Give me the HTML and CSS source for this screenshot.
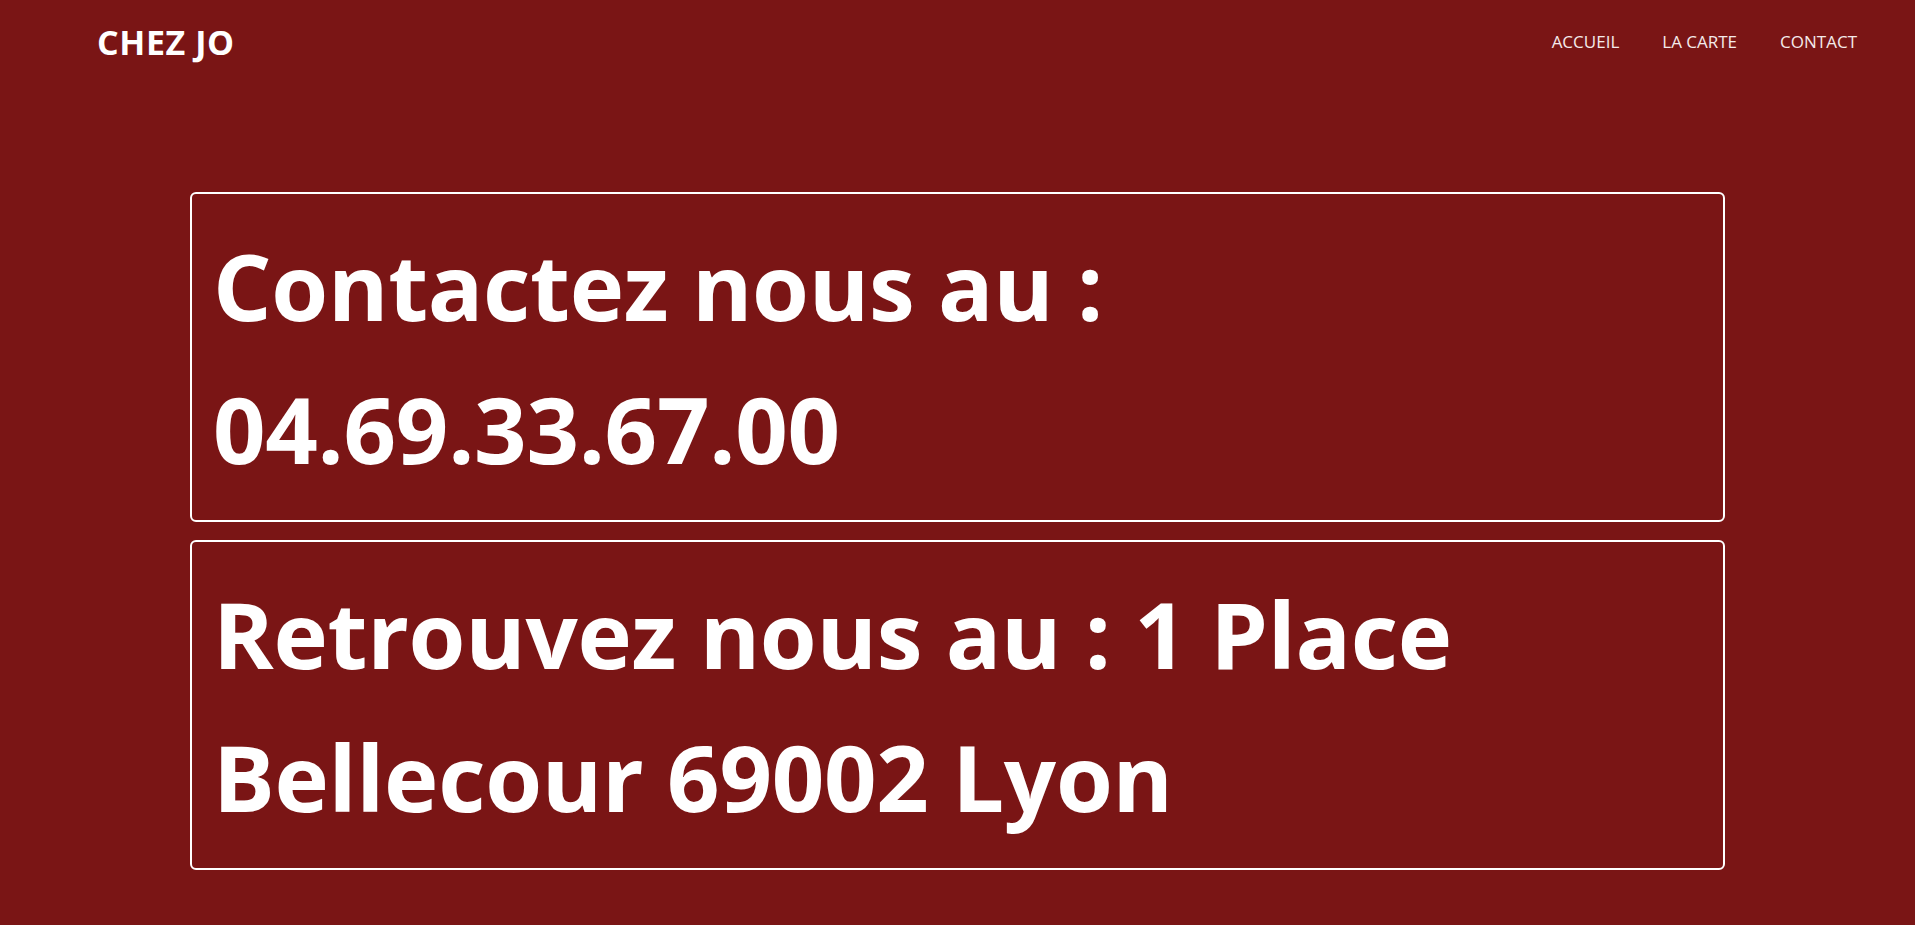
FILE: index.html
```html
<!DOCTYPE html>
<html lang="fr">
<head>
<meta charset="utf-8">
<title>Chez Jo - Contact</title>
<link rel="stylesheet" href="styles.css">
</head>
<body>
<header class="topbar">
  <div class="brand">CHEZ JO</div>
  <nav class="menu">
    <a href="#" class="menu-link">ACCUEIL</a>
    <a href="#" class="menu-link">LA CARTE</a>
    <a href="#" class="menu-link">CONTACT</a>
  </nav>
</header>
<main class="content">
  <section class="card">
    <h1 class="card-title">Contactez nous au : 04.69.33.67.00</h1>
  </section>
  <section class="card">
    <h1 class="card-title">Retrouvez nous au : 1 Place Bellecour 69002 Lyon</h1>
  </section>
</main>
</body>
</html>
```
FILE: styles.css
```css
html, body {
  margin: 0;
  padding: 0;
}
body {
  background: #7a1515;
  color: #ffffff;
  font-family: "Open Sans", "Noto Sans", sans-serif;
  height: 925px;
  overflow: hidden;
}
.topbar {
  display: flex;
  justify-content: space-between;
  align-items: center;
  height: 84px;
  padding: 0 58px 0 97px;
}
.brand {
  font-size: 34px;
  font-weight: 700;
  letter-spacing: 0.6px;
}
.menu {
  display: flex;
  gap: 43px;
  padding-bottom: 2px;
}
.menu-link {
  color: #f4eaea;
  text-decoration: none;
  font-size: 17px;
}
.content {
  display: flex;
  flex-direction: column;
  align-items: center;
  gap: 18px;
  padding-top: 108px;
}
.card {
  box-sizing: border-box;
  width: 1535px;
  border: 2px solid #ffffff;
  border-radius: 6px;
  padding: 20px 21px 20px 21px;
}
.card-title {
  margin: 0;
  font-size: 92px;
  line-height: 143px;
  font-weight: 700;
  letter-spacing: -0.3px;
}
```
